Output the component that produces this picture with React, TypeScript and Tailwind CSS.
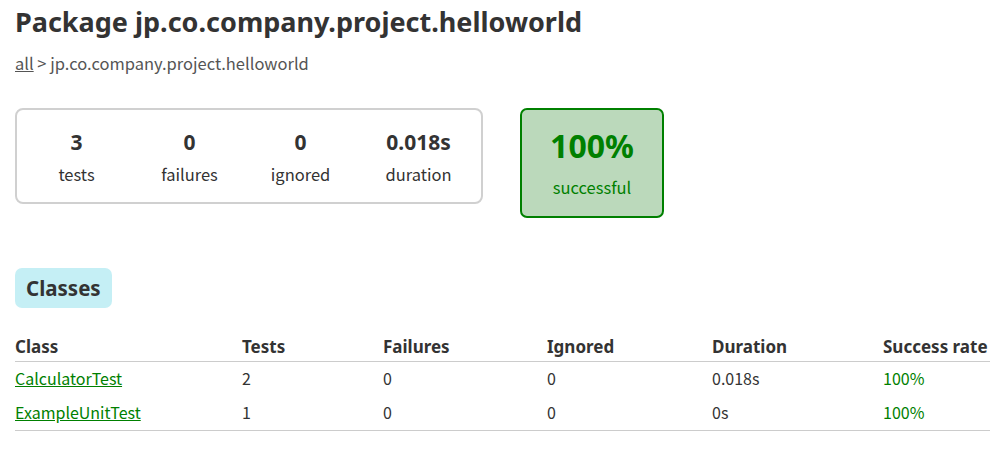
export default function App() {
  const rows = [
    { name: 'CalculatorTest', tests: '2', failures: '0', ignored: '0', duration: '0.018s', rate: '100%' },
    { name: 'ExampleUnitTest', tests: '1', failures: '0', ignored: '0', duration: '0s', rate: '100%' },
  ]
  const counters = [
    { value: '3', label: 'tests', w: 'w-[116px]' },
    { value: '0', label: 'failures', w: 'w-[112px]' },
    { value: '0', label: 'ignored', w: 'w-[112px]' },
    { value: '0.018s', label: 'duration', w: 'w-[126px]' },
  ]

  return (
    <div className="min-h-[449px] bg-white pl-[15px] pr-[15px] pt-[4px] text-[#333] font-['Noto_Sans',sans-serif]">
      <h1 className="text-[27px] font-bold leading-[36px]">Package jp.co.company.project.helloworld</h1>
      <div className="mt-[13px] text-[16.5px] leading-[20px] text-[#555] font-['Noto_Sans_CJK_JP',sans-serif]">
        <a href="#" className="underline">all</a> &gt; jp.co.company.project.helloworld
      </div>

      {/* summary */}
      <div className="mt-[35px] flex items-start gap-[37px]">
        <div className="flex h-[96px] w-[468px] items-center rounded-[8px] border-2 border-[#d0d0d0] pl-[2px]">
          {counters.map((c) => (
            <div key={c.label} className={`${c.w} flex flex-col items-center`}>
              <div className="text-[21px] font-bold leading-[26px]">{c.value}</div>
              <div className="mt-[9px] text-[16.5px] leading-[20px] font-['Noto_Sans_CJK_JP',sans-serif]">{c.label}</div>
            </div>
          ))}
        </div>
        <div className="flex h-[110px] w-[144px] flex-col items-center justify-center rounded-[7px] border-2 border-[#008000] bg-[#bbd9bb] text-[#008000]">
          <div className="-mt-[3px] text-[32px] font-bold leading-[38px]">100%</div>
          <div className="mt-[12px] text-[16.5px] leading-[20px] font-['Noto_Sans_CJK_JP',sans-serif]">successful</div>
        </div>
      </div>

      {/* tabs */}
      <div className="mt-[50px] inline-flex h-[40px] items-center rounded-[7px] bg-[#c5eff5] px-[11px] text-[20.5px] font-bold">
        Classes
      </div>

      <table className="mt-[23px] w-[975px] table-fixed border-collapse text-left">
        <colgroup>
          <col className="w-[227px]" />
          <col className="w-[141px]" />
          <col className="w-[164px]" />
          <col className="w-[165px]" />
          <col className="w-[171px]" />
          <col />
        </colgroup>
        <thead>
          <tr className="border-b border-[#ccc] text-[17px] font-bold">
            <th className="h-[30px] pb-[1px] align-bottom font-bold">Class</th>
            <th className="pb-[1px] align-bottom font-bold">Tests</th>
            <th className="pb-[1px] align-bottom font-bold">Failures</th>
            <th className="pb-[1px] align-bottom font-bold">Ignored</th>
            <th className="pb-[1px] align-bottom font-bold">Duration</th>
            <th className="pb-[1px] align-bottom font-bold">Success rate</th>
          </tr>
        </thead>
        <tbody className="text-[16px] font-['Noto_Sans_CJK_JP',sans-serif]">
          {rows.map((r, i) => (
            <tr key={r.name} className={i === rows.length - 1 ? 'border-b border-[#ccc]' : ''}>
              <td className={i === 0 ? 'h-[33px]' : 'h-[36px]'}>
                <a href="#" className="text-[#008000] underline">{r.name}</a>
              </td>
              <td>{r.tests}</td>
              <td>{r.failures}</td>
              <td>{r.ignored}</td>
              <td>{r.duration}</td>
              <td className="text-[#008000]">{r.rate}</td>
            </tr>
          ))}
        </tbody>
      </table>
    </div>
  )
}
